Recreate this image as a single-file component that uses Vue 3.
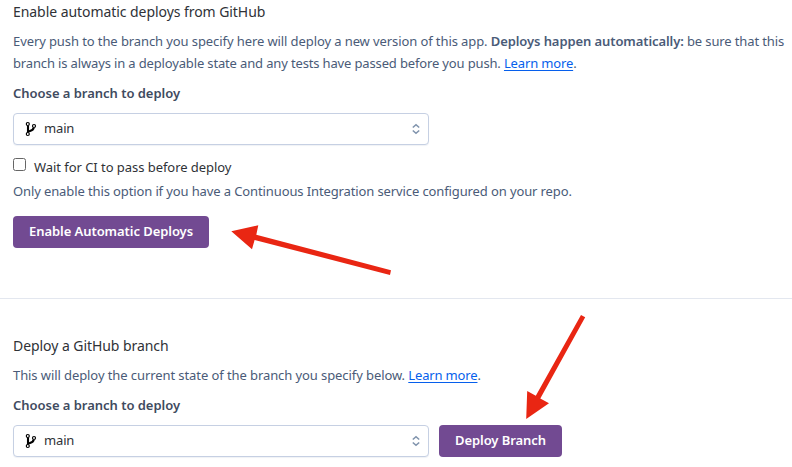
<script setup>
</script>

<template>
  <main class="page">
    <section class="panel auto">
      <h2 class="title">Enable automatic deploys from GitHub</h2>
      <p class="copy">
        <span class="l1">Every push to the branch you specify here will deploy a new version of this app. </span><strong>Deploys happen automatically:</strong><span class="l1b"> be sure that this</span><br>
        <span class="l2">branch is always in a deployable state and any tests have passed before you push. </span><a class="link">Learn more</a>.
      </p>
      <div class="label">Choose a branch to deploy</div>
      <div class="select">
        <svg class="branch" width="12" height="16" viewBox="0 0 12 16"><g fill="none" stroke="#000"><path d="M3 4.2v7.6M3.2 10.7C5.4 9.6 8.2 9.6 8.7 6.7" stroke-width="2.1" /><g fill="#fff" stroke-width="1.2"><circle cx="2.8" cy="3" r="1.5" /><circle cx="9" cy="5" r="1.5" /><circle cx="2.8" cy="13" r="1.5" /></g></g></svg>
        <span class="value">main</span>
        <svg class="chevrons" width="10" height="12" viewBox="0 0 10 12"><path d="M1.8 4.5 5 1.7l3.2 2.8M1.8 7.5 5 10.3l3.2-2.8" fill="none" stroke="#8094ad" stroke-width="1.6" /></svg>
      </div>
      <label class="check"><span class="box"></span><span>Wait for CI to pass before deploy</span></label>
      <p class="hint">Only enable this option if you have a Continuous Integration service configured on your repo.</p>
      <button class="btn wide">Enable Automatic Deploys</button>
    </section>
    <section class="panel manual">
      <h2 class="title">Deploy a GitHub branch</h2>
      <p class="copy"><span class="l3">This will deploy the current state of the branch you specify below. </span><a class="link">Learn more</a>.</p>
      <div class="label">Choose a branch to deploy</div>
      <div class="row">
        <div class="select">
          <svg class="branch" width="12" height="16" viewBox="0 0 12 16"><g fill="none" stroke="#000"><path d="M3 4.2v7.6M3.2 10.7C5.4 9.6 8.2 9.6 8.7 6.7" stroke-width="2.1" /><g fill="#fff" stroke-width="1.2"><circle cx="2.8" cy="3" r="1.5" /><circle cx="9" cy="5" r="1.5" /><circle cx="2.8" cy="13" r="1.5" /></g></g></svg>
          <span class="value">main</span>
          <svg class="chevrons" width="10" height="12" viewBox="0 0 10 12"><path d="M1.8 4.5 5 1.7l3.2 2.8M1.8 7.5 5 10.3l3.2-2.8" fill="none" stroke="#8094ad" stroke-width="1.6" /></svg>
        </div>
        <button class="btn short">Deploy Branch</button>
      </div>
    </section>
    <svg class="arrows" width="792" height="467" viewBox="0 0 792 467" fill="#e92613">
      <path d="M231.3 231.3 258.3 225.3 256.3 234.7 391 270.2 390 275 254.6 239.9 252 249.3Z" />
      <path d="M526.2 419 527.2 391 535.8 395.7 581 315 585.2 317.2 540.3 398.5 549 403.3Z" />
    </svg>
  </main>
</template>

<style>
body { background: #fff; }
</style>

<style scoped>
.page { position: relative; box-sizing: border-box; width: 792px; height: 467px; overflow: hidden; background: #fff; font-family: "Noto Sans", "Open Sans", sans-serif; font-size: 13px; color: #2f3237; }
.panel { box-sizing: border-box; padding-left: 13px; white-space: nowrap; }
.auto { height: 299px; padding-top: 2px; border-bottom: 1px solid #e3e7ef; }
.manual { padding-top: 37px; }
.title { margin: 0; font-size: 14px; font-weight: 400; line-height: 20px; letter-spacing: -0.06px; }
.copy { margin: 8px 0 0; line-height: 22px; color: #4a5b78; }
.copy strong { font-weight: 600; letter-spacing: -0.09px; }
.l1 { letter-spacing: -0.095px; }
.l1b { letter-spacing: -0.12px; }
.l2 { letter-spacing: -0.147px; }
.l3 { letter-spacing: -0.085px; }
.link { color: #065fec; letter-spacing: -0.15px; text-decoration: underline; text-underline-offset: 2px; }
.label { margin-top: 9px; line-height: 20px; font-weight: 600; letter-spacing: -0.03px; color: #3f4b60; }
.select { box-sizing: border-box; display: flex; align-items: center; width: 416px; height: 32px; margin-top: 10px; padding: 0 7px 0 11px; border: 1px solid #c6d0e3; border-radius: 4px; background: #fff; box-shadow: 0 1px 1px #f0f2f6; }
.branch { margin-right: 7px; }
.value { padding-bottom: 2px; letter-spacing: -0.15px; }
.chevrons { margin-left: auto; }
.check { display: flex; gap: 8px; margin-top: 12px; line-height: 20px; letter-spacing: -0.05px; }
.box { box-sizing: border-box; width: 13px; height: 13px; margin-top: 1px; border: 1px solid #666; border-radius: 2.5px; background: #fff; }
.hint { margin: 4px 0 0; line-height: 20px; letter-spacing: -0.115px; color: #4a5b78; }
.btn { display: block; box-sizing: border-box; height: 32px; padding: 0 0 2px; border: 0; border-radius: 4px; background: #724a92; color: #fff; font: 600 13px/30px "Noto Sans", "Open Sans", sans-serif; letter-spacing: -0.06px; }
.wide { width: 196px; margin-top: 15px; }
.short { width: 123px; }
.row { display: flex; gap: 10px; margin-top: 10px; }
.row .select { margin-top: 0; }
.arrows { position: absolute; left: 0; top: 0; pointer-events: none; }
</style>
